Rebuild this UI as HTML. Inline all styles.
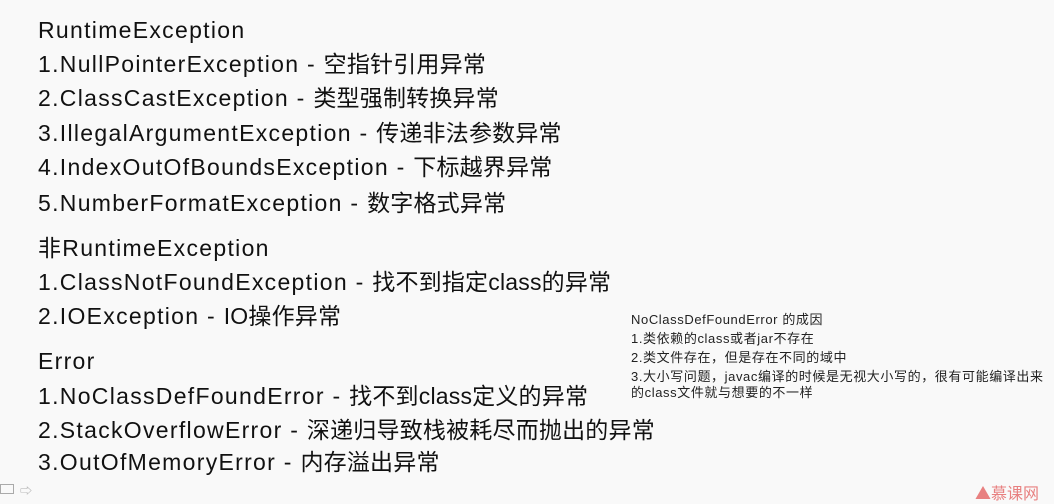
<!DOCTYPE html>
<html><head><meta charset="utf-8"><style>
body{margin:0;width:1054px;height:494px;background:#f9f9f9;overflow:hidden;position:relative;font-family:"Liberation Sans","Noto Sans CJK SC",sans-serif;color:#111}
.l{position:absolute;left:38px;font-size:23px;line-height:26px;white-space:nowrap;letter-spacing:1.3px}
.l span{letter-spacing:0.2px}
.s{position:absolute;left:631px;font-size:13px;line-height:15px;white-space:nowrap;color:#222;letter-spacing:0.6px}
</style></head><body>
<div class="l" style="top:17px">RuntimeException</div>
<div class="l" style="top:51px">1.NullPointerException - <span>空指针引用异常</span></div>
<div class="l" style="top:85px">2.ClassCastException - <span>类型强制转换异常</span></div>
<div class="l" style="top:120px">3.IllegalArgumentException - <span>传递非法参数异常</span></div>
<div class="l" style="top:154px">4.IndexOutOfBoundsException - <span>下标越界异常</span></div>
<div class="l" style="top:190px">5.NumberFormatException - <span>数字格式异常</span></div>
<div class="l" style="top:235px">非RuntimeException</div>
<div class="l" style="top:269px">1.ClassNotFoundException - <span>找不到指定class的异常</span></div>
<div class="l" style="top:303px">2.IOException - <span>IO操作异常</span></div>
<div class="l" style="top:348px">Error</div>
<div class="l" style="top:383px">1.NoClassDefFoundError - <span>找不到class定义的异常</span></div>
<div class="l" style="top:417px">2.StackOverflowError - <span>深递归导致栈被耗尽而抛出的异常</span></div>
<div class="l" style="top:449px">3.OutOfMemoryError - <span>内存溢出异常</span></div>
<div class="s" style="top:312px">NoClassDefFoundError 的成因</div>
<div class="s" style="top:331px">1.类依赖的class或者jar不存在</div>
<div class="s" style="top:350px">2.类文件存在，但是存在不同的域中</div>
<div class="s" style="top:369px">3.大小写问题，javac编译的时候是无视大小写的，很有可能编译出来</div>
<div class="s" style="top:385px">的class文件就与想要的不一样</div>
<div style="position:absolute;left:0;top:484px;width:14px;height:10px;border:1px solid #aaa;box-sizing:border-box"></div>
<div style="position:absolute;left:20px;top:482px;color:#aaa;font-size:12px">⇨</div>
<div style="position:absolute;left:975px;top:480px;color:#e88080;font-size:16px;font-family:'Noto Sans CJK SC',sans-serif">▲慕课网</div>
</body></html>
